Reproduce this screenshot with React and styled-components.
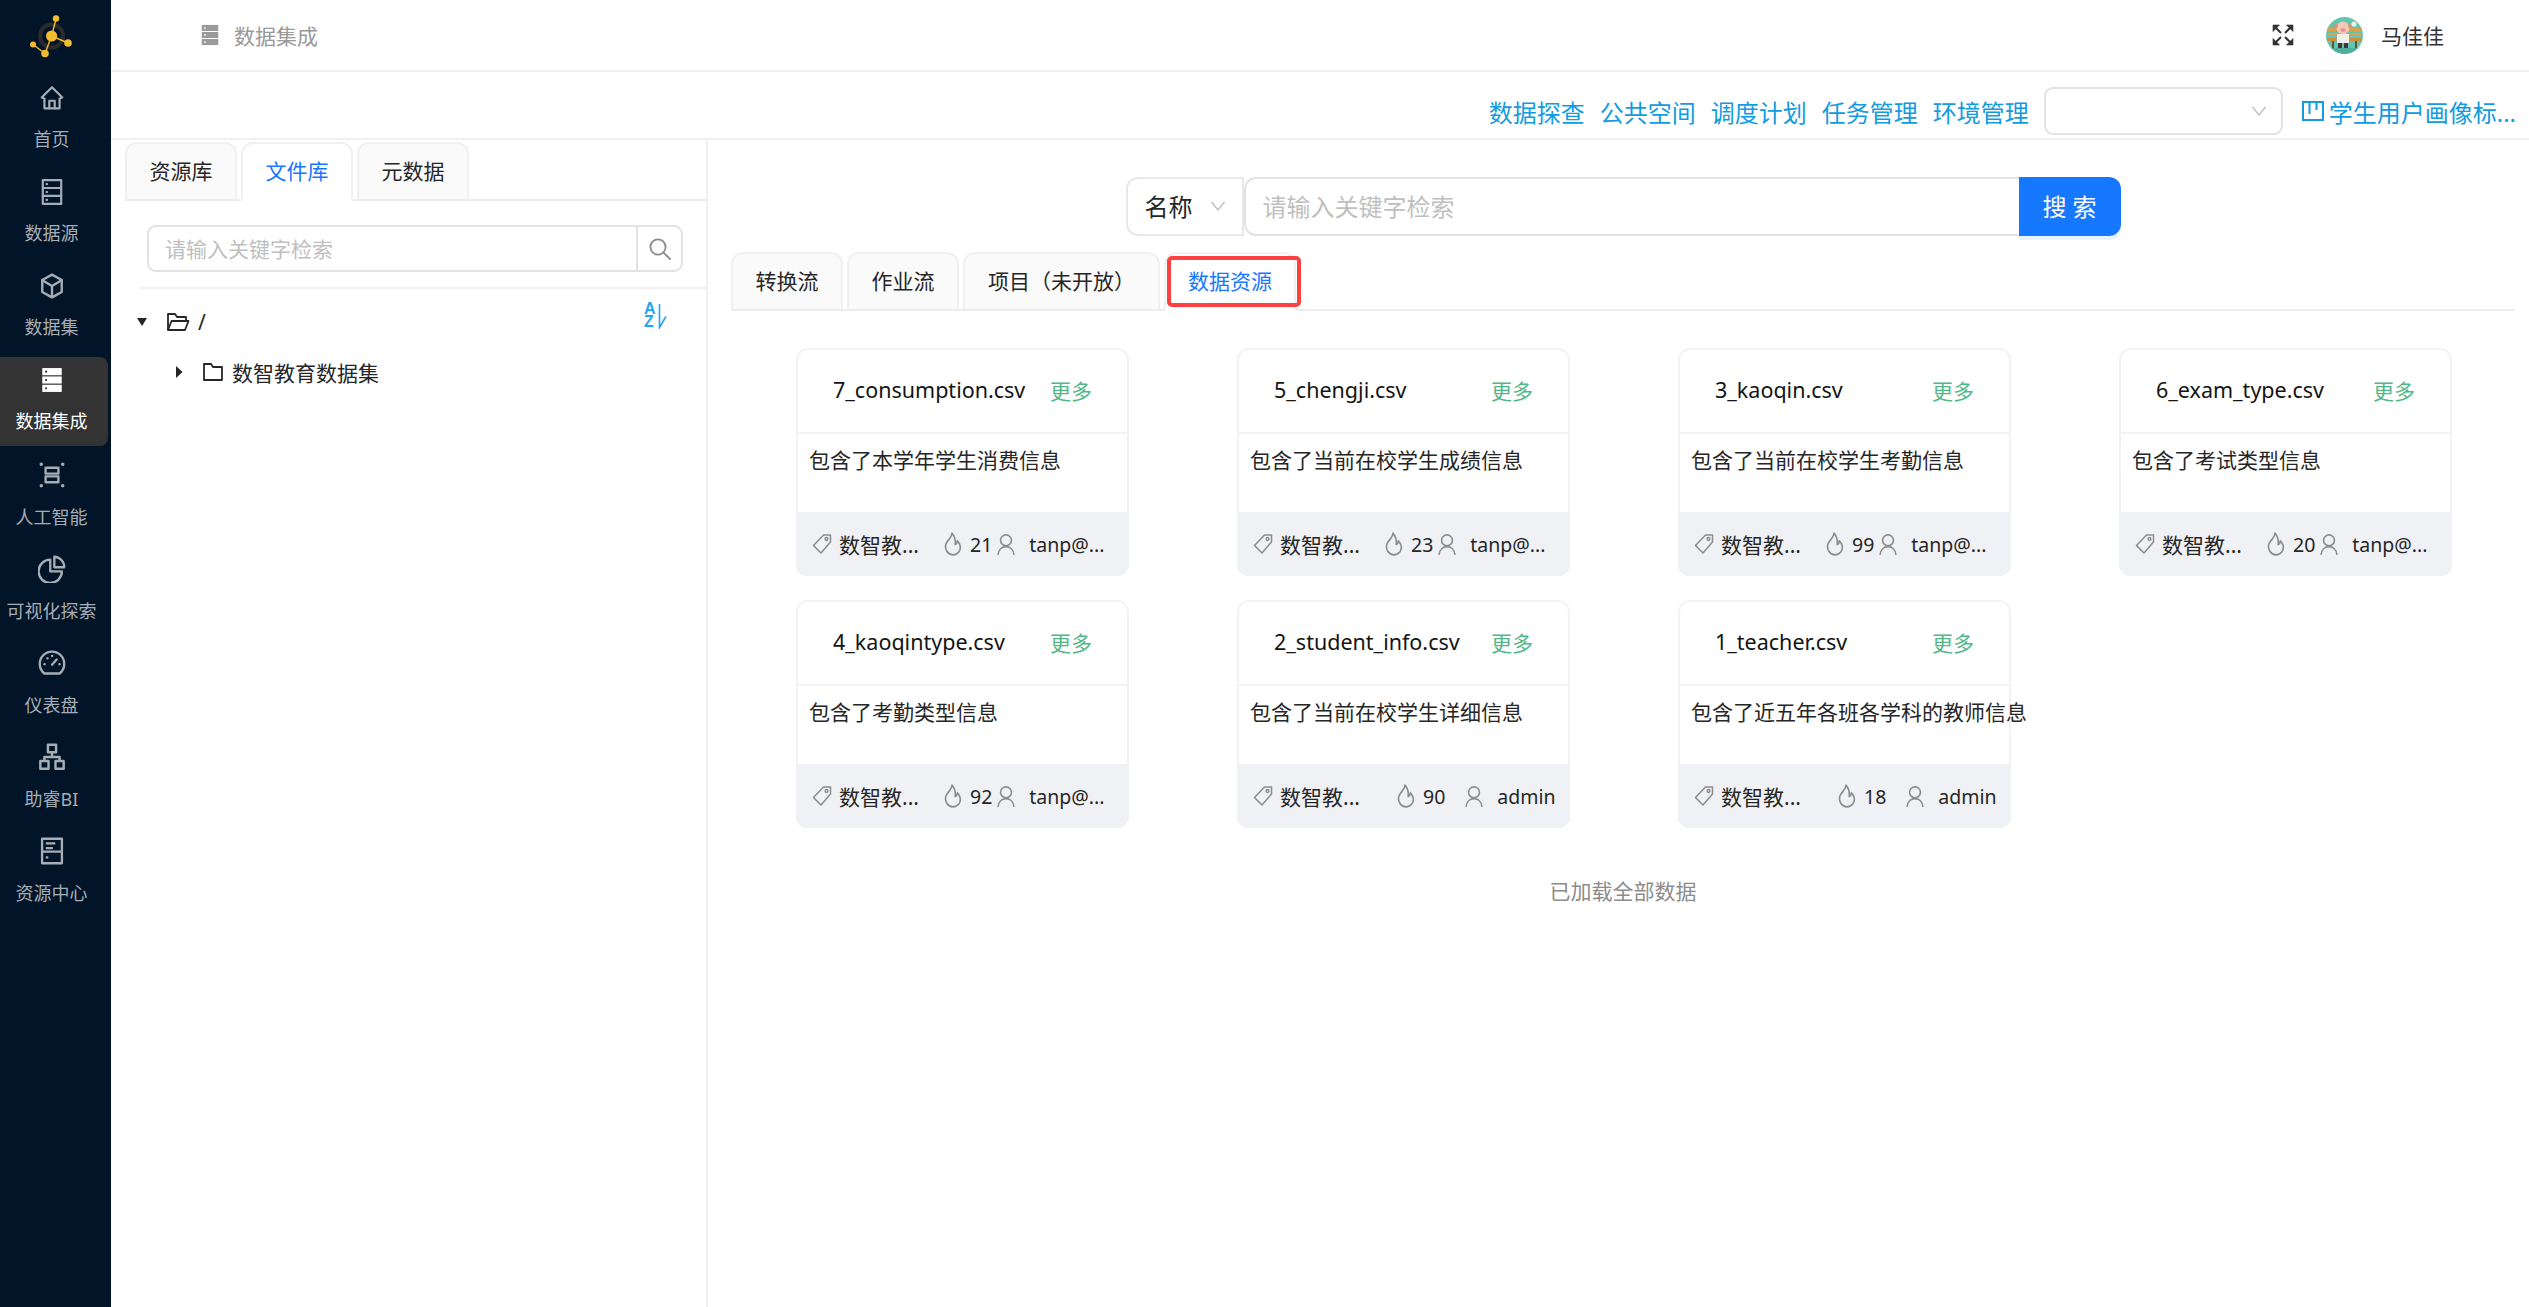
import styled, { createGlobalStyle } from "styled-components";

const GlobalStyle = createGlobalStyle`
  html, body {
    margin: 0;
    padding: 0;
    background: #fff;
    font-family: "Noto Sans", "Noto Sans CJK SC", sans-serif;
    color: #262626;
  }
  * { box-sizing: border-box; }
`;

const Page = styled.div`
  display: flex;
  width: 2529px;
  height: 1307px;
  overflow: hidden;
`;

const Sidebar = styled.nav`
  width: 111px;
  flex: none;
  background: #011428;
  display: flex;
  flex-direction: column;
`;

const LogoBox = styled.div`
  height: 75px;
  padding: 15px 0 0 30px;
`;

const NavList = styled.div`
  display: flex;
  flex-direction: column;
  gap: 5px;
`;

const NavItem = styled.a`
  width: 108px;
  height: 89px;
  display: flex;
  flex-direction: column;
  align-items: center;
  padding-top: 10px;
  padding-right: 5px;
  border-radius: 0 8px 8px 0;
  background: ${({ $active }) => ($active ? "#333333" : "transparent")};
  color: ${({ $active }) => ($active ? "#ffffff" : "#a7adb4")};
  font-size: 18px;
  line-height: 26px;
  white-space: nowrap;

  svg {
    display: block;
    margin-bottom: 15px;
  }
`;

const Main = styled.div`
  flex: 1;
  min-width: 0;
  display: flex;
  flex-direction: column;
`;

const Header = styled.header`
  height: 72px;
  flex: none;
  border-bottom: 2px solid #f0f0f0;
  display: flex;
  align-items: center;
  padding: 0 85px 0 88px;
`;

const Crumb = styled.div`
  display: flex;
  align-items: center;
  gap: 13px;
  color: #999999;
  font-size: 21px;
`;

const UserArea = styled.div`
  margin-left: auto;
  display: flex;
  align-items: center;
  color: #333333;
  font-size: 21px;
`;

const FullScreen = styled.span`
  display: flex;
  margin-right: 32px;
`;

const UserName = styled.span`
  margin-left: 18px;
`;

const ActionBar = styled.div`
  height: 68px;
  flex: none;
  border-bottom: 2px solid #f0f0f0;
  display: flex;
  align-items: center;
  justify-content: flex-end;
  padding: 12px 13px 0 0;
`;

const ActionLink = styled.a`
  color: #129bdf;
  font-size: 24px;
  margin-right: 15px;
  white-space: nowrap;
  display: flex;
  align-items: center;
`;

const PlanLink = styled(ActionLink)`
  margin: 0 0 0 19px;
  gap: 5px;
`;

const PlainSelect = styled.div`
  width: 239px;
  height: 48px;
  border: 2px solid #e2e2e2;
  border-radius: 9px;
  display: flex;
  align-items: center;
  justify-content: flex-end;
  padding-right: 14px;
  color: #bfbfbf;
`;

const Body = styled.div`
  flex: 1;
  min-height: 0;
  display: flex;
`;

const LeftPanel = styled.aside`
  width: 597px;
  flex: none;
  border-right: 2px solid #f0f0f0;
  padding: 2px 0 0 14px;
`;

const TabRow = styled.div`
  display: flex;
  gap: 4px;
  height: 59px;
  border-bottom: 2px solid #ececec;
`;

const Tab = styled.div`
  position: relative;
  width: ${({ $width }) => $width}px;
  height: 59px;
  display: flex;
  align-items: center;
  justify-content: center;
  padding-bottom: 3px;
  border: 2px solid #f0f0f0;
  border-bottom-color: ${({ $active }) => ($active ? "#ffffff" : "#ececec")};
  border-radius: 12px 12px 0 0;
  background: ${({ $active }) => ($active ? "#ffffff" : "#fafafa")};
  color: ${({ $active }) => ($active ? "#1677ff" : "#262626")};
  font-size: 21px;
  white-space: nowrap;
`;

const Highlight = styled.span`
  position: absolute;
  top: 2px;
  left: 1px;
  right: -7px;
  bottom: 2px;
  border: 4px solid #ff4040;
  border-radius: 5px;
`;

const TreeSearch = styled.div`
  display: flex;
  width: 536px;
  height: 47px;
  margin: 24px 0 0 22px;
  font-size: 21px;
`;

const TreeInput = styled.div`
  flex: 1;
  border: 2px solid #e2e2e2;
  border-right: none;
  border-radius: 9px 0 0 9px;
  display: flex;
  align-items: center;
  padding: 0 0 1px 16px;
  color: #bfbfbf;
`;

const TreeSearchBtn = styled.div`
  width: 47px;
  border: 2px solid #e2e2e2;
  border-radius: 0 9px 9px 0;
  display: flex;
  align-items: center;
  justify-content: center;
`;

const TreeDivider = styled.div`
  height: 2px;
  margin: 15px 0 0 15px;
  background: #f0f0f0;
`;

const TreeArea = styled.div`
  position: relative;
  padding-top: 8px;
`;

const SortButton = styled.span`
  position: absolute;
  top: 14px;
  left: 519px;
  display: flex;
  gap: 2px;
  color: #1ea7f0;
`;

const SortLetters = styled.span`
  display: flex;
  flex-direction: column;
  font-family: "Liberation Sans", sans-serif;
  font-size: 16px;
  font-weight: 700;
  line-height: 12.5px;
`;

const TreeRow = styled.div`
  display: flex;
  align-items: center;
  height: 50px;
  font-size: 21px;
  padding-left: ${({ $indent }) => $indent}px;
`;

const Caret = styled.span`
  display: flex;
  width: ${({ $width }) => $width}px;
`;

const FolderLabel = styled.span`
  margin-left: 8px;
`;

const Content = styled.section`
  flex: 1;
  min-width: 0;
  padding: 37px 14px 0 23px;
`;

const SearchBar = styled.div`
  display: flex;
  justify-content: center;
  font-size: 24px;
  height: 59px;
`;

const FieldSelect = styled.div`
  width: 118px;
  border: 2px solid #e8e8e8;
  border-radius: 12px 0 0 12px;
  display: flex;
  align-items: center;
  justify-content: space-between;
  padding: 0 16px 2px 17px;
  color: #262626;
`;

const FieldInput = styled.div`
  width: 775px;
  border: 2px solid #e2e2e2;
  border-right: none;
  border-radius: 12px 0 0 12px;
  display: flex;
  align-items: center;
  padding: 0 0 2px 17px;
  color: #bfbfbf;
`;

const SearchButton = styled.div`
  width: 102px;
  background: #1677ff;
  color: #fff;
  border-radius: 0 12px 12px 0;
  box-shadow: 0 4px 0 #e6f4ff;
  display: flex;
  align-items: center;
  justify-content: center;
  padding-bottom: 2px;
`;

const ContentTabs = styled(TabRow)`
  margin-top: 16px;
`;

const CardGrid = styled.div`
  display: grid;
  grid-template-columns: repeat(4, 333px);
  column-gap: 108px;
  row-gap: 24px;
  padding: 37px 0 0 65px;
`;

const Card = styled.article`
  height: 228px;
  border: 2px solid #f3f3f3;
  border-radius: 12px;
  display: flex;
  flex-direction: column;
`;

const CardHead = styled.div`
  height: 84px;
  flex: none;
  border-bottom: 2px solid #f3f3f3;
  display: flex;
  align-items: center;
  padding: 0 0 3px 35px;
`;

const CardTitle = styled.span`
  width: 217px;
  flex: none;
  font-size: 21.5px;
  color: #141414;
  white-space: nowrap;
`;

const MoreLink = styled.a`
  color: #52b788;
  font-size: 21px;
`;

const CardDesc = styled.div`
  flex: 1;
  padding: 11px 0 0 11px;
  font-size: 21px;
  line-height: 30px;
  color: #262626;
  white-space: nowrap;
`;

const CardFoot = styled.div`
  height: 64px;
  flex: none;
  margin: 0 -2px -2px;
  background: #f0f1f5;
  border-radius: 0 0 11px 11px;
  display: flex;
  align-items: center;
  padding-left: 16px;
  font-size: 21px;
  color: #262626;
  white-space: nowrap;
`;

const TagCell = styled.span`
  display: flex;
  align-items: center;
  gap: 7px;
  width: 110px;
  flex: none;
`;

const StatCell = styled.span`
  display: flex;
  align-items: center;
  gap: ${({ $gap }) => $gap}px;
  margin-left: ${({ $offset }) => $offset}px;
  font-size: 19.5px;
`;

const Finished = styled.div`
  margin-top: 47px;
  text-align: center;
  color: #8c8c8c;
  font-size: 21px;
`;

const Stroke = ({ size = 26, color = "currentColor", width = 2, children, box = 24 }) => (
  <svg width={size} height={size} viewBox={`0 0 ${box} ${box}`} fill="none" stroke={color} strokeWidth={width} strokeLinejoin="round" strokeLinecap="round">
    {children}
  </svg>
);

const Logo = () => (
  <svg width="44" height="46" viewBox="0 0 44 46">
    <circle cx="21.6" cy="21" r="11.5" fill="none" stroke="#2b2b2b" strokeWidth="4" />
    <g stroke="#f4bb2e" strokeWidth="1.4">
      <line x1="21.6" y1="21" x2="26" y2="4" />
      <line x1="21.6" y1="21" x2="38" y2="28" />
      <line x1="21.6" y1="21" x2="15" y2="38.5" />
      <line x1="15" y1="38.5" x2="3" y2="29.5" />
    </g>
    <g fill="#f4bb2e">
      <circle cx="21.6" cy="21" r="5.6" />
      <circle cx="26" cy="3.5" r="3.2" />
      <circle cx="38" cy="28" r="3.8" />
      <circle cx="15" cy="38.5" r="3.8" />
      <circle cx="3" cy="29.5" r="3" />
    </g>
  </svg>
);

const HomeIcon = () => (
  <Stroke size={26}>
    <path d="M12 2 2.5 11.5 5 12.5V21.5H19V12.5L21.5 11.5Z" />
    <path d="M9.5 21.5V14.5H14.5V21.5" />
  </Stroke>
);

const SourceIcon = () => (
  <Stroke size={26}>
    <rect x="3.5" y="1" width="17" height="22" />
    <path d="M3.5 8.3H20.5M3.5 15.6H20.5" />
    <path d="M7 4.7h.5M7 12h.5M7 19.3h.5" />
  </Stroke>
);

const CubeIcon = () => (
  <Stroke size={26} width={2.2}>
    <path d="M12 1.5 21 6.5V17.5L12 22.5 3 17.5V6.5Z" />
    <path d="M3.5 7 12 12 20.5 7M12 12V22" />
  </Stroke>
);

const ServerIcon = ({ color = "#ffffff", dot = "#333333", size = 26 }) => (
  <svg width={size} height={size} viewBox="0 0 24 24">
    <rect x="3" y="1" width="18" height="6.6" fill={color} />
    <rect x="3" y="8.7" width="18" height="6.6" fill={color} />
    <rect x="3" y="16.4" width="18" height="6.6" fill={color} />
    <circle cx="6.5" cy="4.3" r="1" fill={dot} />
    <circle cx="6.5" cy="12" r="1" fill={dot} />
    <circle cx="6.5" cy="19.7" r="1" fill={dot} />
  </svg>
);

const AiIcon = () => (
  <Stroke size={28}>
    <rect x="6.5" y="5.8" width="11" height="5" />
    <rect x="6.5" y="13.2" width="11" height="5" />
    <g fill="currentColor" strokeWidth="1">
      <circle cx="2.8" cy="2.8" r="1" />
      <circle cx="21.2" cy="2.8" r="1" />
      <circle cx="2.8" cy="21.2" r="1" />
      <circle cx="21.2" cy="21.2" r="1" />
    </g>
  </Stroke>
);

const PieIcon = () => (
  <Stroke size={28}>
    <path d="M10.5 4A10 10 0 1 0 20.5 14H10.5Z" />
    <path d="M14 1.5A9 9 0 0 1 22.5 10.5H14Z" />
  </Stroke>
);

const GaugeIcon = () => (
  <Stroke size={28}>
    <path d="M5.5 21A10.5 10.5 0 1 1 18.5 21Z" />
    <path d="M12 13.5 16 9" />
    <path d="M5.5 13h.2M18.3 13h.2M8 8h.2M12 6h.2" />
  </Stroke>
);

const OrgIcon = () => (
  <Stroke size={28} width={2.1}>
    <rect x="8.5" y="1.5" width="7" height="6.5" />
    <rect x="2" y="15.5" width="7" height="6.5" />
    <rect x="15" y="15.5" width="7" height="6.5" />
    <path d="M12 8V12M5.5 15.5V12H18.5V15.5" />
  </Stroke>
);

const ResourceIcon = () => (
  <Stroke size={28}>
    <rect x="3.5" y="1.5" width="17" height="21" />
    <path d="M3.5 12.5H20.5M7.5 5.5H14M7.5 9.5H12M7.5 17.5H8" />
  </Stroke>
);

const ExpandIcon = () => (
  <svg width="22" height="22" viewBox="0 0 22 22" fill="#333" stroke="#333">
    <path d="M1 1h6.5L1 7.5Z" strokeWidth="0.6" />
    <path d="M3.5 3.5 9 9" strokeWidth="2" />
    <path d="M21 1h-6.5L21 7.5Z" strokeWidth="0.6" />
    <path d="M18.5 3.5 13 9" strokeWidth="2" />
    <path d="M1 21h6.5L1 14.5Z" strokeWidth="0.6" />
    <path d="M3.5 18.5 9 13" strokeWidth="2" />
    <path d="M21 21h-6.5L21 14.5Z" strokeWidth="0.6" />
    <path d="M18.5 18.5 13 13" strokeWidth="2" />
  </svg>
);

const Avatar = () => (
  <svg width="37" height="37" viewBox="0 0 37 37">
    <defs>
      <clipPath id="avatar-clip">
        <circle cx="18.5" cy="18.5" r="18.5" />
      </clipPath>
    </defs>
    <g clipPath="url(#avatar-clip)">
      <rect width="37" height="37" fill="#62c5b2" />
      <rect y="31" width="37" height="6" fill="#4fae9c" />
      <rect x="1" y="11" width="35" height="3" fill="#d9a24c" />
      <rect x="1" y="16" width="35" height="3" fill="#d9a24c" />
      <rect x="1" y="21" width="35" height="3" fill="#c9913e" />
      <rect x="6" y="24" width="2" height="7" fill="#6b5132" />
      <rect x="29" y="24" width="2" height="7" fill="#6b5132" />
      <ellipse cx="17" cy="21" rx="7" ry="7" fill="#a8a59e" />
      <rect x="11" y="17" width="12" height="9" fill="#f1efe9" />
      <circle cx="17" cy="11" r="6.5" fill="#f2c9b4" />
      <ellipse cx="17" cy="13" rx="2.6" ry="1.8" fill="#e78d8d" />
      <circle cx="10" cy="9" r="2" fill="#d98f74" />
      <circle cx="24" cy="9" r="2" fill="#d98f74" />
      <circle cx="28" cy="7" r="2.6" fill="#eeeeea" />
      <rect x="12" y="26" width="4" height="5" fill="#3a3a3a" />
      <rect x="18" y="26" width="4" height="5" fill="#3a3a3a" />
    </g>
  </svg>
);

const Chevron = ({ color = "#bfbfbf" }) => (
  <svg width="16" height="12" viewBox="0 0 16 12" fill="none" stroke={color} strokeWidth="1.4">
    <path d="M1.5 2 8 10 14.5 2" />
  </svg>
);

const BoardIcon = () => (
  <svg width="22" height="24" viewBox="0 0 22 24" fill="none" stroke="#129bdf" strokeWidth="2">
    <rect x="1" y="3" width="20" height="18" />
    <path d="M7.5 3V15M14.5 3V11" />
  </svg>
);

const SearchIcon = () => (
  <svg width="24" height="24" viewBox="0 0 24 24" fill="none" stroke="#8c8c8c" strokeWidth="1.8" strokeLinecap="round">
    <circle cx="10" cy="10" r="7.6" />
    <path d="M15.6 15.6 22 22" />
  </svg>
);

const SortArrow = () => (
  <svg width="9" height="26" viewBox="0 0 9 26" fill="none" stroke="#1ea7f0" strokeWidth="1.6">
    <path d="M1.5 1V24.5L8 13.5" />
  </svg>
);

const CaretDown = () => (
  <svg width="12" height="10" viewBox="0 0 12 10" fill="#262626">
    <path d="M1 1h10L6 9Z" />
  </svg>
);

const CaretRight = () => (
  <svg width="10" height="14" viewBox="0 0 10 14" fill="#262626">
    <path d="M2 1v12l6.5-6Z" />
  </svg>
);

const FolderOpen = () => (
  <svg width="24" height="22" viewBox="0 0 24 22" fill="none" stroke="#262626" strokeWidth="1.8" strokeLinejoin="round">
    <path d="M2 19V3h7l2 3h9v4" />
    <path d="M2 19 5.5 10H22.5L19 19Z" />
  </svg>
);

const FolderClosed = () => (
  <svg width="22" height="20" viewBox="0 0 22 20" fill="none" stroke="#262626" strokeWidth="1.8" strokeLinejoin="round">
    <path d="M2 18V2h7l2 3h9v13Z" />
  </svg>
);

const TagIcon = () => (
  <svg width="20" height="22" viewBox="0 0 20 22" fill="none" stroke="#8c8c8c" strokeWidth="1.5" strokeLinejoin="round">
    <path d="M11.5 2H18.5V9L9 20 1.5 12.5Z" />
    <circle cx="14.5" cy="6" r="1.4" />
  </svg>
);

const FlameIcon = () => (
  <svg width="18" height="24" viewBox="1 1 16 22" fill="none" stroke="#8c8c8c" strokeWidth="1.5" strokeLinejoin="round">
    <path d="M8 2C8.5 6 4 8 2.5 12 1 17 4.5 22 9 22 13.5 22 16.5 18 15.5 13.5 15 11.5 14 10 13 9 13 11 12 12 11 12.5 11.5 8.5 10.5 5 8 2Z" />
  </svg>
);

const UserIcon = () => (
  <svg width="18" height="21" viewBox="0.5 1 17 20" fill="none" stroke="#8c8c8c" strokeWidth="1.5" strokeLinecap="round">
    <circle cx="9" cy="7" r="5.2" />
    <path d="M1.5 20.5C2 16 5 13 9 13 13 13 16 16 16.5 20.5" />
  </svg>
);

const navItems = [
  { label: "首页", icon: <HomeIcon /> },
  { label: "数据源", icon: <SourceIcon /> },
  { label: "数据集", icon: <CubeIcon /> },
  { label: "数据集成", icon: <ServerIcon />, active: true },
  { label: "人工智能", icon: <AiIcon /> },
  { label: "可视化探索", icon: <PieIcon /> },
  { label: "仪表盘", icon: <GaugeIcon /> },
  { label: "助睿BI", icon: <OrgIcon /> },
  { label: "资源中心", icon: <ResourceIcon /> },
];

const cards = [
  { title: "7_consumption.csv", desc: "包含了本学年学生消费信息", heat: 21, owner: "tanp@..." },
  { title: "5_chengji.csv", desc: "包含了当前在校学生成绩信息", heat: 23, owner: "tanp@..." },
  { title: "3_kaoqin.csv", desc: "包含了当前在校学生考勤信息", heat: 99, owner: "tanp@..." },
  { title: "6_exam_type.csv", desc: "包含了考试类型信息", heat: 20, owner: "tanp@..." },
  { title: "4_kaoqintype.csv", desc: "包含了考勤类型信息", heat: 92, owner: "tanp@..." },
  { title: "2_student_info.csv", desc: "包含了当前在校学生详细信息", heat: 90, owner: "admin" },
  { title: "1_teacher.csv", desc: "包含了近五年各班各学科的教师信息", heat: 18, owner: "admin" },
];

export default function App() {
  return (
    <Page>
      <GlobalStyle />
      <Sidebar>
        <LogoBox>
          <Logo />
        </LogoBox>
        <NavList>
          {navItems.map((item) => (
            <NavItem key={item.label} $active={item.active}>
              {item.icon}
              {item.label}
            </NavItem>
          ))}
        </NavList>
      </Sidebar>
      <Main>
        <Header>
          <Crumb>
            <ServerIcon color="#9a9a9a" dot="#ffffff" size={22} />
            数据集成
          </Crumb>
          <UserArea>
            <FullScreen>
              <ExpandIcon />
            </FullScreen>
            <Avatar />
            <UserName>马佳佳</UserName>
          </UserArea>
        </Header>
        <ActionBar>
          <ActionLink>数据探查</ActionLink>
          <ActionLink>公共空间</ActionLink>
          <ActionLink>调度计划</ActionLink>
          <ActionLink>任务管理</ActionLink>
          <ActionLink>环境管理</ActionLink>
          <PlainSelect>
            <Chevron />
          </PlainSelect>
          <PlanLink>
            <BoardIcon />
            学生用户画像标...
          </PlanLink>
        </ActionBar>
        <Body>
          <LeftPanel>
            <TabRow>
              <Tab $width={112}>资源库</Tab>
              <Tab $width={112} $active>文件库</Tab>
              <Tab $width={112}>元数据</Tab>
            </TabRow>
            <TreeSearch>
              <TreeInput>请输入关键字检索</TreeInput>
              <TreeSearchBtn>
                <SearchIcon />
              </TreeSearchBtn>
            </TreeSearch>
            <TreeDivider />
            <TreeArea>
              <SortButton>
                <SortLetters>
                  <span>A</span>
                  <span>Z</span>
                </SortLetters>
                <SortArrow />
              </SortButton>
              <TreeRow $indent={11}>
                <Caret $width={30}>
                  <CaretDown />
                </Caret>
                <FolderOpen />
                <FolderLabel>/</FolderLabel>
              </TreeRow>
              <TreeRow $indent={49}>
                <Caret $width={28}>
                  <CaretRight />
                </Caret>
                <FolderClosed />
                <FolderLabel>数智教育数据集</FolderLabel>
              </TreeRow>
            </TreeArea>
          </LeftPanel>
          <Content>
            <SearchBar>
              <FieldSelect>
                名称
                <Chevron />
              </FieldSelect>
              <FieldInput>请输入关键字检索</FieldInput>
              <SearchButton>搜 索</SearchButton>
            </SearchBar>
            <ContentTabs>
              <Tab $width={112}>转换流</Tab>
              <Tab $width={112}>作业流</Tab>
              <Tab $width={197}>项目（未开放）</Tab>
              <Tab $width={132} $active>
                数据资源
                <Highlight />
              </Tab>
            </ContentTabs>
            <CardGrid>
              {cards.map((card) => {
                const admin = card.owner === "admin";
                return (
                  <Card key={card.title}>
                    <CardHead>
                      <CardTitle>{card.title}</CardTitle>
                      <MoreLink>更多</MoreLink>
                    </CardHead>
                    <CardDesc>{card.desc}</CardDesc>
                    <CardFoot>
                      <TagCell>
                        <TagIcon />
                        数智教...
                      </TagCell>
                      <StatCell $gap={8} $offset={admin ? 34 : 22}>
                        <FlameIcon />
                        {card.heat}
                      </StatCell>
                      <StatCell $gap={14} $offset={admin ? 20 : 5}>
                        <UserIcon />
                        {card.owner}
                      </StatCell>
                    </CardFoot>
                  </Card>
                );
              })}
            </CardGrid>
            <Finished>已加载全部数据</Finished>
          </Content>
        </Body>
      </Main>
    </Page>
  );
}
